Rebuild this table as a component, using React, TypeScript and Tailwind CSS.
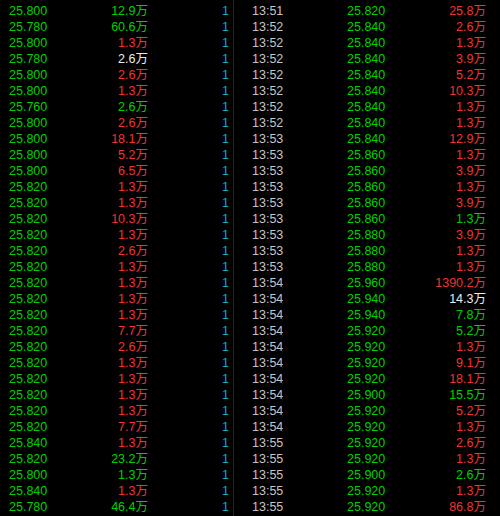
const G = "text-[#00d000]"
const R = "text-[#f03434]"
const W = "text-[#ececec]"

type Tick = [string, string, string]

// left panel: price, volume, colour of volume
const left: Tick[] = [
  ["25.800", "12.9", G],
  ["25.780", "60.6", G],
  ["25.800", "1.3", R],
  ["25.780", "2.6", W],
  ["25.800", "2.6", R],
  ["25.800", "1.3", R],
  ["25.760", "2.6", G],
  ["25.800", "2.6", R],
  ["25.800", "18.1", R],
  ["25.800", "5.2", R],
  ["25.800", "6.5", R],
  ["25.820", "1.3", R],
  ["25.820", "1.3", R],
  ["25.820", "10.3", R],
  ["25.820", "1.3", R],
  ["25.820", "2.6", R],
  ["25.820", "1.3", R],
  ["25.820", "1.3", R],
  ["25.820", "1.3", R],
  ["25.820", "1.3", R],
  ["25.820", "7.7", R],
  ["25.820", "2.6", R],
  ["25.820", "1.3", R],
  ["25.820", "1.3", R],
  ["25.820", "1.3", R],
  ["25.820", "1.3", R],
  ["25.820", "7.7", R],
  ["25.840", "1.3", R],
  ["25.820", "23.2", G],
  ["25.800", "1.3", G],
  ["25.840", "1.3", R],
  ["25.780", "46.4", G],
]

// right panel: time, price, volume, colour
const right: [string, string, string, string][] = [
  ["13:51", "25.820", "25.8", R],
  ["13:52", "25.840", "2.6", R],
  ["13:52", "25.840", "1.3", R],
  ["13:52", "25.840", "3.9", R],
  ["13:52", "25.840", "5.2", R],
  ["13:52", "25.840", "10.3", R],
  ["13:52", "25.840", "1.3", R],
  ["13:52", "25.840", "1.3", R],
  ["13:53", "25.840", "12.9", R],
  ["13:53", "25.860", "1.3", R],
  ["13:53", "25.860", "3.9", R],
  ["13:53", "25.860", "1.3", R],
  ["13:53", "25.860", "3.9", R],
  ["13:53", "25.860", "1.3", G],
  ["13:53", "25.880", "3.9", R],
  ["13:53", "25.880", "1.3", R],
  ["13:53", "25.880", "1.3", R],
  ["13:54", "25.960", "1390.2", R],
  ["13:54", "25.940", "14.3", W],
  ["13:54", "25.940", "7.8", G],
  ["13:54", "25.920", "5.2", G],
  ["13:54", "25.920", "1.3", R],
  ["13:54", "25.920", "9.1", R],
  ["13:54", "25.920", "18.1", R],
  ["13:54", "25.900", "15.5", G],
  ["13:54", "25.920", "5.2", R],
  ["13:54", "25.920", "1.3", R],
  ["13:55", "25.920", "2.6", R],
  ["13:55", "25.920", "1.3", R],
  ["13:55", "25.900", "2.6", G],
  ["13:55", "25.920", "1.3", R],
  ["13:55", "25.920", "86.8", R],
]

const App = () => {
  return (
    <main
      className="flex w-[500px] h-[516px] bg-black overflow-hidden text-[12.5px] leading-[16px]"
      style={{ fontFamily: '"Liberation Sans", "Noto Sans CJK SC", sans-serif' }}
    >
      <div className="w-[233px] pt-[3px] flex flex-col">
        {left.map(([price, vol, color], i) => (
          <div key={i} className="h-[16px] flex items-center pl-[9px]">
            <span className="w-[60px] text-[#00d000]">{price}</span>
            <span className={`w-[79px] text-right ${color}`}>{vol}万</span>
            <span className="w-[81px] text-right text-[#12a8c8]">1</span>
          </div>
        ))}
      </div>
      <div className="w-px bg-[#700000]" />
      <div className="flex-1 pt-[3px] flex flex-col">
        {right.map(([time, price, vol, color], i) => (
          <div key={i} className="h-[16px] flex items-center pl-[18px]">
            <span className="w-[95px] text-[#c4c4c4]">{time}</span>
            <span className="w-[60px] text-[#00d000]">{price}</span>
            <span className={`w-[79px] text-right ${color}`}>{vol}万</span>
          </div>
        ))}
      </div>
    </main>
  )
}

export default App
